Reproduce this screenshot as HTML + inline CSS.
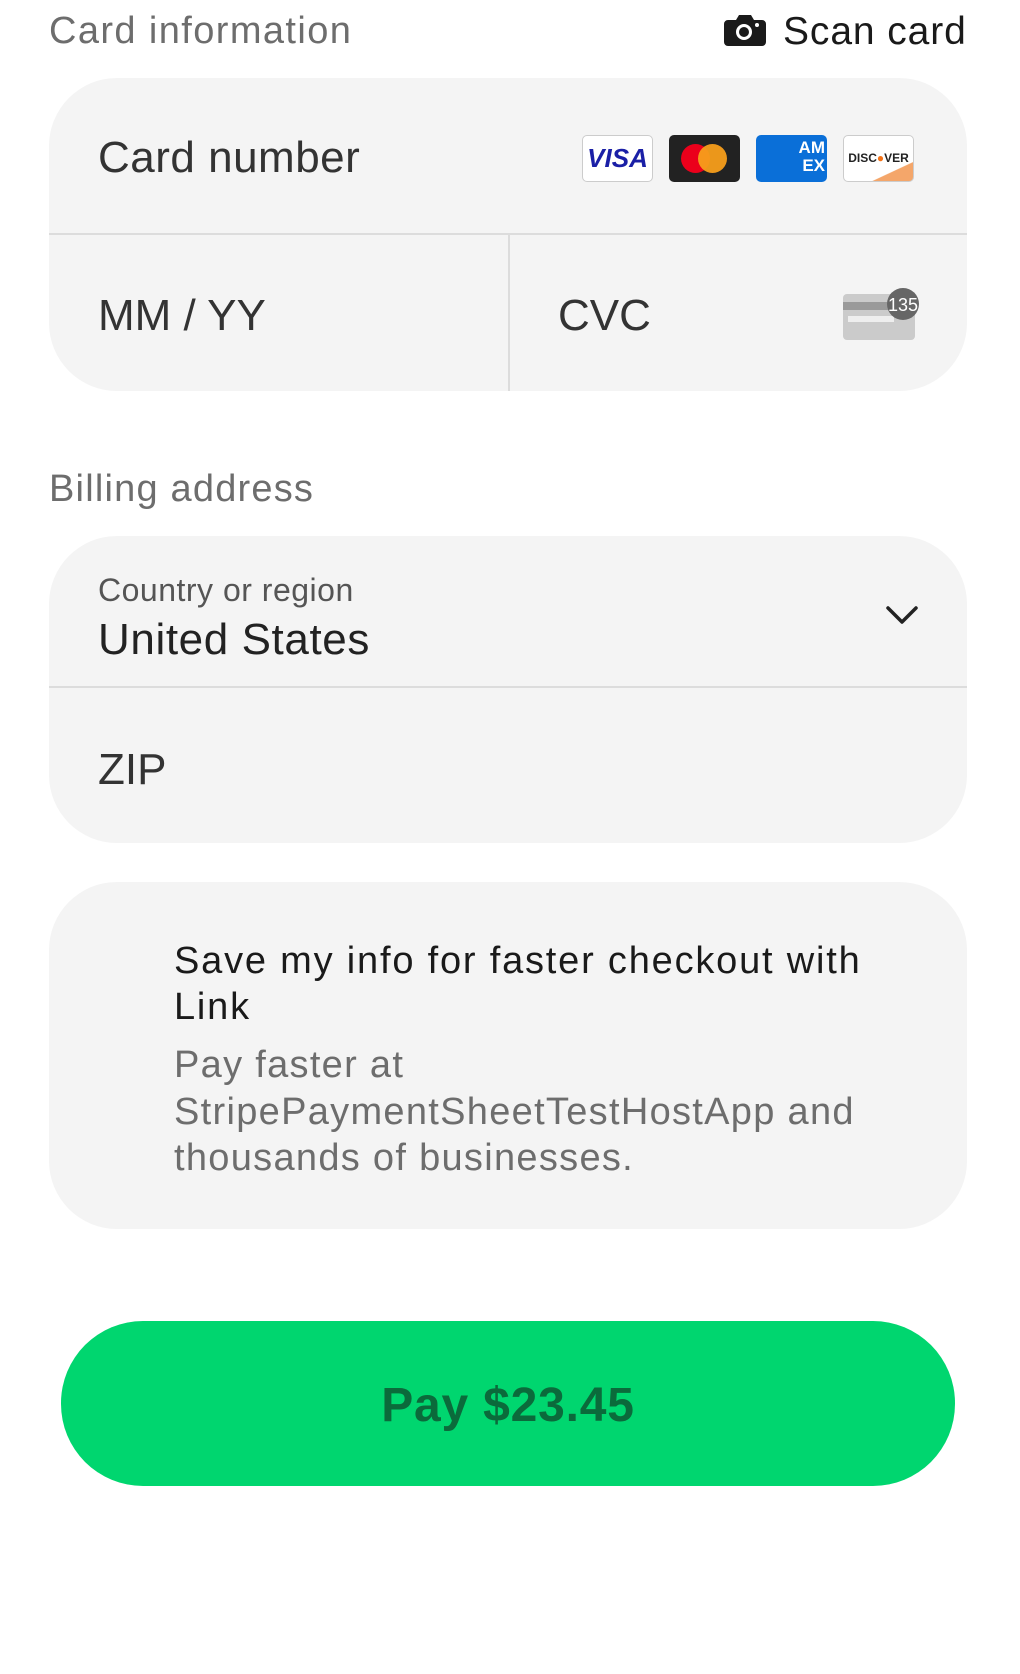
<!DOCTYPE html>
<html><head><meta charset="utf-8"><style>
*{margin:0;padding:0;box-sizing:border-box}
body{width:1020px;height:1674px;background:#fff;font-family:"Liberation Sans",sans-serif;position:relative;overflow:hidden}
.a{position:absolute;white-space:nowrap;line-height:1}
.box{position:absolute;left:49px;width:918px;background:#f4f4f4;border-radius:68px;overflow:hidden}
.hl{position:absolute;left:0;right:0;height:2px;background:#dcdcdc}
.brand{position:absolute;top:57px;width:71px;height:47px;border-radius:5px}
</style></head><body>
<div class="a" style="left:49px;top:12px;font-size:38px;color:#6d6d6d;letter-spacing:1.4px">Card information</div>
<svg class="a" style="left:724px;top:14px" width="42" height="32" viewBox="0 0 42 32">
<path d="M4 6h8l3-5h12l3 5h8a4 4 0 0 1 4 4v18a4 4 0 0 1-4 4H4a4 4 0 0 1-4-4V10a4 4 0 0 1 4-4z" fill="#1a1a1a"/>
<circle cx="20" cy="18" r="8" fill="#fff"/><circle cx="20" cy="18" r="5" fill="#1a1a1a"/><circle cx="33" cy="11" r="2" fill="#fff"/></svg>
<div class="a" style="left:783px;top:12px;font-size:39px;color:#1a1a1a;letter-spacing:0.9px">Scan card</div>

<div class="box" style="top:78px;height:313px">
  <div class="hl" style="top:155px"></div>
  <div style="position:absolute;left:459px;top:156px;width:2px;height:160px;background:#dcdcdc"></div>
  <div class="a" style="left:49px;top:58px;font-size:44px;color:#333;letter-spacing:0.5px">Card number</div>
  <div class="brand" style="left:533px;background:#fff;border:1.5px solid #ccc;font:italic bold 26px 'Liberation Sans';color:#1a1fa6;text-align:center;line-height:44px">VISA</div>
  <div class="brand" style="left:620px;background:#222"><span style="position:absolute;left:12px;top:9px;width:29px;height:29px;border-radius:50%;background:#eb001b"></span><span style="position:absolute;left:29px;top:9px;width:29px;height:29px;border-radius:50%;background:#f79e1b;opacity:.95"></span></div>
  <div class="brand" style="left:707px;background:#0a6fd8;color:#fff;font:bold 17px 'Liberation Sans';text-align:right;padding:4px 2px 0 0;line-height:18px">AM<br>EX</div>
  <div class="brand" style="left:794px;background:linear-gradient(155deg,#fff 75%,#f4a66a 76%);border:1.5px solid #ccc;font:bold 12px 'Liberation Sans';color:#222;text-align:center;line-height:44px">DISC<span style="color:#f47216">●</span>VER</div>
  <div class="a" style="left:49px;top:216px;font-size:44px;color:#333">MM / YY</div>
  <div class="a" style="left:509px;top:216px;font-size:44px;color:#333">CVC</div>
  <svg style="position:absolute;left:794px;top:210px" width="80" height="55" viewBox="0 0 80 55">
    <rect x="0" y="6" width="72" height="46" rx="4" fill="#cbcbcb"/><rect x="0" y="14" width="72" height="8" fill="#9a9a9a"/><rect x="5" y="28" width="46" height="6" fill="#eee"/>
    <circle cx="60" cy="16" r="16" fill="#666"/><text x="60" y="23" font-family="Liberation Sans" font-size="18" fill="#fff" text-anchor="middle">135</text></svg>
</div>

<div class="a" style="left:49px;top:470px;font-size:38px;color:#6d6d6d;letter-spacing:1.2px">Billing address</div>

<div class="box" style="top:536px;height:307px">
  <div class="hl" style="top:150px"></div>
  <div class="a" style="left:49px;top:38px;font-size:32px;color:#555;letter-spacing:0.5px">Country or region</div>
  <div class="a" style="left:49px;top:82px;font-size:44px;color:#222;letter-spacing:0.6px">United States</div>
  <svg style="position:absolute;left:836px;top:68px" width="34" height="22" viewBox="0 0 34 22"><path d="M3 4l14 14L31 4" fill="none" stroke="#222" stroke-width="3.5" stroke-linecap="round" stroke-linejoin="round"/></svg>
  <div class="a" style="left:49px;top:212px;font-size:44px;color:#333">ZIP</div>
</div>

<div class="box" style="top:882px;height:347px">
  <div style="position:absolute;left:125px;top:56px;font-size:38px;line-height:46px;color:#1a1a1a;white-space:nowrap;letter-spacing:1.8px;font-weight:500">Save my info for faster checkout with<br>Link</div>
  <div style="position:absolute;left:125px;top:160px;font-size:38px;line-height:46.5px;color:#6d6d6d;white-space:nowrap;letter-spacing:1.3px">Pay faster at<br>StripePaymentSheetTestHostApp and<br>thousands of businesses.</div>
</div>

<div style="position:absolute;left:61px;top:1321px;width:894px;height:165px;border-radius:82px;background:#00d66f"></div>
<div class="a" style="left:61px;width:894px;top:1382px;text-align:center;font-size:48px;font-weight:bold;color:#0b6a3b;letter-spacing:0.8px">Pay $23.45</div>
</body></html>
